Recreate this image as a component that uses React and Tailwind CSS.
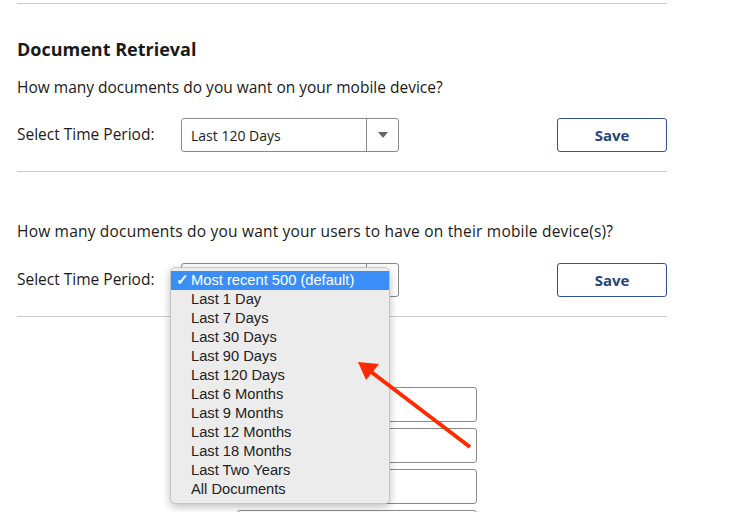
import React from "react"

const options = [
  "Most recent 500 (default)",
  "Last 1 Day",
  "Last 7 Days",
  "Last 30 Days",
  "Last 90 Days",
  "Last 120 Days",
  "Last 6 Months",
  "Last 9 Months",
  "Last 12 Months",
  "Last 18 Months",
  "Last Two Years",
  "All Documents",
]

const SelectBox = ({ value }) => (
  <div className="flex h-[34px] w-[218px] items-stretch rounded-[3px] border border-[#8a8a8a] bg-white">
    <div className="flex flex-1 items-center pl-[9px] text-[14px] text-[#222]">{value}</div>
    <div className="flex w-[32px] items-center justify-center border-l border-[#8a8a8a]">
      <svg width="10" height="6" viewBox="0 0 10 6">
        <polygon points="0,0 10,0 5,6" fill="#666" />
      </svg>
    </div>
  </div>
)

const TimeRow = ({ value }) => (
  <div className="flex items-center">
    <span className="w-[164px] text-[15.5px] text-[#1a1a1a]">Select Time Period:</span>
    <SelectBox value={value} />
    <button className="ml-auto h-[34px] w-[110px] rounded-[3px] border border-[#2f5597] bg-white text-[15px] font-bold text-[#27457a]">
      Save
    </button>
  </div>
)

const Divider = ({ className = "" }) => <div className={`h-px bg-[#c9c9c9] ${className}`} />

export default function App() {
  return (
    <div className="relative h-[512px] w-[731px] overflow-hidden bg-white" style={{ fontFamily: '"Open Sans", sans-serif' }}>
      <div className="w-[667px] pl-[17px] pt-[3px]">
        <Divider />
        <h2 className="mt-[33px] text-[18px] font-bold leading-[24px] text-[#1a1a1a]">Document Retrieval</h2>
        <p className="mt-[16px] text-[15.5px] leading-[20px] text-[#1a1a1a]">
          How many documents do you want on your mobile device?
        </p>
        <div className="mt-[21px]">
          <TimeRow value="Last 120 Days" />
        </div>
        <Divider className="mt-[19px]" />
        <p className="mt-[49px] text-[15.5px] leading-[20px] tracking-[0.2px] text-[#1a1a1a]">
          How many documents do you want your users to have on their mobile device(s)?
        </p>
        <div className="mt-[22px]">
          <TimeRow value="" />
        </div>
        <Divider className="mt-[19px]" />
        <div className="ml-[220px] mt-[70px] flex flex-col gap-[6px]">
          <div className="h-[35px] w-[240px] rounded-[3px] border border-[#8a8a8a]" />
          <div className="h-[35px] w-[240px] rounded-[3px] border border-[#8a8a8a]" />
          <div className="h-[35px] w-[240px] rounded-[3px] border border-[#8a8a8a]" />
          <div className="h-[35px] w-[240px] rounded-[3px] border border-[#8a8a8a]" />
        </div>
      </div>

      {/* open dropdown menu */}
      <div
        className="absolute left-[170px] top-[267px] w-[220px] rounded-[5px] border border-[#c4c4c4] bg-[#ececec] pb-[4px] pt-[3px] shadow-[0_3px_8px_rgba(0,0,0,0.25)]"
        style={{ fontFamily: '"Liberation Sans", Arial, sans-serif' }}
      >
        {options.map((opt, i) => (
          <div
            key={opt}
            className={`relative flex h-[19px] items-center pl-[20px] text-[14.7px] ${
              i === 0 ? "bg-[#3b8ef8] text-white" : "text-[#222]"
            }`}
          >
            {i === 0 && <span className="absolute left-[5px] text-[15px] font-bold">✓</span>}
            {opt}
          </div>
        ))}
      </div>

      {/* red annotation arrow */}
      <svg className="pointer-events-none absolute left-0 top-0" width="731" height="512">
        <line x1="470" y1="447" x2="370" y2="371" stroke="#ff2a00" strokeWidth="4" />
        <polygon points="358,362 379,364 366,380" fill="#ff2a00" />
      </svg>
    </div>
  )
}
